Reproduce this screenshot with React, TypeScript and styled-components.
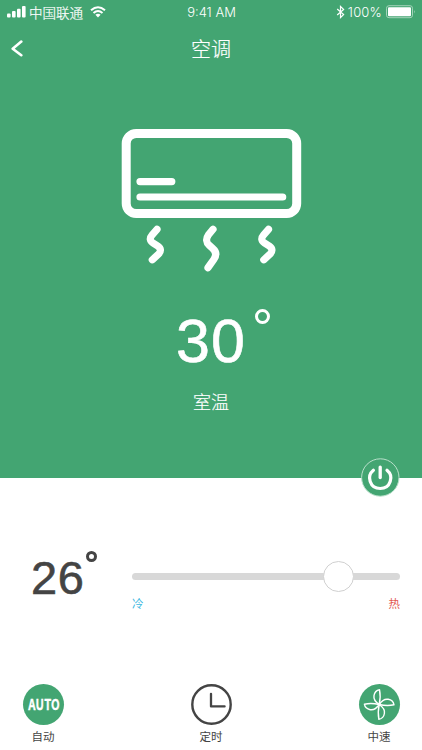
import React from 'react';
import styled, { createGlobalStyle } from 'styled-components';

const GREEN = '#43a572';
const DARK = '#444444';

const GlobalStyle = createGlobalStyle`
  * { box-sizing: border-box; }
  body { margin: 0; background: #fff; }
  svg { display: block; flex: none; }
`;

const Screen = styled.div`
  width: 422px;
  height: 750px;
  overflow: hidden;
  display: flex;
  flex-direction: column;
  background: #fff;
  font-family: Inter, 'Noto Sans CJK SC', sans-serif;
`;

const Hero = styled.section`
  height: 478px;
  flex: none;
  display: flex;
  flex-direction: column;
  background: ${GREEN};
  color: #fff;
`;

const StatusBar = styled.header`
  height: 24px;
  display: grid;
  grid-template-columns: 1fr auto 1fr;
  align-items: center;
  padding: 0 6px 0 7px;
  font-size: 13px;
  line-height: 24px;
`;

const StatusGroup = styled.div<{ $end?: boolean }>`
  display: flex;
  align-items: center;
  justify-content: ${(p) => (p.$end ? 'flex-end' : 'flex-start')};
`;

const Carrier = styled.span`
  margin: -1px 7px 0 3px;
  font-size: 13.5px;
  font-weight: 300;
  font-family: 'Noto Sans CJK SC', sans-serif;
  -webkit-text-stroke: 0.2px currentColor;
`;

const Clock = styled.span`
  font-size: 13px;
  font-weight: 300;
`;

const Percent = styled.span`
  margin: 0 4px 0 3px;
  font-size: 13px;
  font-weight: 300;
  letter-spacing: 0.2px;
`;

const NavBar = styled.nav`
  height: 49px;
  display: grid;
  grid-template-columns: 40px 1fr 40px;
  align-items: center;
`;

const BackButton = styled.button`
  border: 0;
  padding: 0 0 0 11px;
  background: none;
`;

const Title = styled.h1`
  margin: 0;
  text-align: center;
  font: 300 20px/28px 'Noto Sans CJK SC', sans-serif;
  -webkit-text-stroke: 0.2px currentColor;
`;

const Conditioner = styled.div`
  display: flex;
  justify-content: center;
  margin-top: 51px;
`;

const Reading = styled.div<{ $large?: boolean }>`
  display: flex;
  align-items: flex-start;
  color: ${(p) => (p.$large ? '#fff' : DARK)};
  font: 400 ${(p) => (p.$large ? '61px/61px' : '47px/47px')} 'Liberation Sans', sans-serif;
  letter-spacing: ${(p) => (p.$large ? '1px' : '0.5px')};
  -webkit-text-stroke: 0.6px currentColor;
`;

const RoomReading = styled(Reading)`
  margin: 33px 0 0 176px;
`;

const Degree = styled.i<{ $size: number; $stroke: number; $gap: number }>`
  width: ${(p) => p.$size}px;
  height: ${(p) => p.$size}px;
  margin-left: ${(p) => p.$gap}px;
  border: ${(p) => p.$stroke}px solid currentColor;
  border-radius: 50%;
`;

const Digits = styled.span<{ $drop: number }>`
  margin-top: ${(p) => p.$drop}px;
`;

const RoomLabel = styled.div`
  margin-top: 16px;
  text-align: center;
  font: 300 18px/26px 'Noto Sans CJK SC', sans-serif;
  -webkit-text-stroke: 0.2px currentColor;
`;

const Panel = styled.section`
  position: relative;
  flex: 1;
  display: flex;
  flex-direction: column;
  justify-content: space-between;
`;

const PowerButton = styled.button`
  position: absolute;
  top: -20px;
  right: 22px;
  padding: 0;
  border: 0;
  background: none;
`;

const Controls = styled.div`
  display: grid;
  grid-template-columns: 101px 268px;
  align-items: start;
  padding: 73px 0 0 31px;
`;

const SliderBlock = styled.div`
  padding-top: 10px;
`;

const Track = styled.div`
  display: flex;
  align-items: center;
  height: 31px;
`;

const Rail = styled.div<{ $side: 'left' | 'right' }>`
  width: ${(p) => (p.$side === 'left' ? '192px' : 'auto')};
  flex: ${(p) => (p.$side === 'left' ? 'none' : '1')};
  height: 7px;
  background: #d8d8d8;
  border-radius: ${(p) => (p.$side === 'left' ? '4px 0 0 4px' : '0 4px 4px 0')};
`;

const Knob = styled.div`
  width: 31px;
  height: 31px;
  margin: 0 -1px;
  border: 1px solid #d0d0d0;
  border-radius: 50%;
  background: #fff;
`;

const Ends = styled.div`
  display: flex;
  justify-content: space-between;
  margin-top: 3px;
  font: 400 11.5px/17px 'Noto Sans CJK SC', sans-serif;
`;

const EndLabel = styled.span<{ $hot?: boolean }>`
  color: ${(p) => (p.$hot ? '#e2574f' : '#3bb8df')};
`;

const Actions = styled.footer`
  display: flex;
  justify-content: space-between;
  padding: 0 22px 5px;
`;

const Action = styled.button`
  width: 42px;
  display: flex;
  flex-direction: column;
  align-items: center;
  border: 0;
  padding: 0;
  background: none;
  color: ${DARK};
  font: 400 11.5px/18px 'Noto Sans CJK SC', sans-serif;
`;

const Disc = styled.span<{ $plain?: boolean }>`
  width: 41px;
  height: 41px;
  margin-bottom: 2px;
  display: grid;
  place-items: center;
  border-radius: 50%;
  background: ${(p) => (p.$plain ? 'transparent' : GREEN)};
`;

const AutoText = styled.span`
  margin-top: -2px;
  color: #fff;
  font: 700 15px/20px 'Noto Sans CJK SC', sans-serif;
  letter-spacing: 0.3px;
  -webkit-text-stroke: 0.3px currentColor;
  transform: scaleX(0.75);
`;

const SignalIcon = () => (
  <svg width="19" height="12" viewBox="0 0 19 12" fill="#fff">
    <rect x="0" y="7.4" width="3.6" height="4" rx="1" />
    <rect x="5" y="5" width="3.6" height="6.4" rx="1" />
    <rect x="10" y="2.7" width="3.6" height="8.7" rx="1" />
    <rect x="15" y="0" width="3.6" height="11.4" rx="1" />
  </svg>
);

const WifiIcon = () => (
  <svg width="16" height="12" viewBox="0 0 16 12" fill="none" stroke="#fff" strokeWidth="2">
    <path d="M1 4.3Q8-1.9 15 4.3M3.5 7Q8 3.1 12.5 7" />
    <path d="M5.4 8.7Q8 6.7 10.6 8.7L8 11.5Z" fill="#fff" stroke="none" />
  </svg>
);

const BluetoothIcon = () => (
  <svg width="9" height="14" viewBox="0 0 9 14" fill="none" stroke="#fff" strokeWidth="1.2">
    <path d="M1.2 4L7.6 9.6L4.5 12.5V1.5L7.6 4.4L1.2 10" />
  </svg>
);

const BatteryIcon = () => (
  <svg width="30" height="14" viewBox="0 0 30 14">
    <rect x=".5" y=".7" width="26" height="12" rx="2.5" fill="none" stroke="#a3d3b9" />
    <rect x="2" y="2.2" width="23" height="9" rx="1" fill="#fff" />
    <path d="M28 4.9Q29.6 6.7 28 8.5Z" fill="#a3d3b9" />
  </svg>
);

const BackIcon = () => (
  <svg width="12" height="17" viewBox="0 0 12 17" fill="none" stroke="#fff" strokeWidth="2.6" strokeLinecap="round" strokeLinejoin="round">
    <path d="M10.3 1.6L1.7 8.7L10.3 15.2" />
  </svg>
);

const ConditionerIcon = () => (
  <svg width="184" height="152" viewBox="0 0 184 152" fill="none" stroke="#fff" strokeLinecap="round" strokeLinejoin="round">
    <rect x="7.2" y="9.5" width="170.5" height="80" rx="10" strokeWidth="9" />
    <path d="M21 57.6H52.8M21 73H163.7" strokeWidth="7.2" />
    <g strokeWidth="7.2">
      <path d="M38 105.3L33.2 110.8C30.4 114 30.6 116.8 34 119L38.7 122C42.2 124.4 42.3 127.4 39.2 130.4L33.3 135.8" />
      <path d="M94 105.3L89.3 111.1C86.8 114.5 87.1 118.6 90.2 121.3L93.5 124.2C97.2 127.4 97.8 131.2 94.8 135.5L89 143.7" />
      <path d="M149.5 105.3L144.7 110.8C141.9 114 142.1 116.8 145.5 119L150.2 122C153.7 124.4 153.8 127.4 150.7 130.4L144.8 135.8" />
    </g>
  </svg>
);

const PowerIcon = () => (
  <svg width="39" height="39" viewBox="0 0 39 39" fill="none">
    <circle cx="19.3" cy="19.5" r="18.7" fill={GREEN} stroke="#b9e0cb" />
    <path d="M19.2 9.1V19.6" stroke="#fff" strokeWidth="3.3" strokeLinecap="round" />
    <path d="M12.4 12.2C5.3 18 8.7 30.5 19.2 30.5C29.7 30.5 33.1 18 26 12.2" stroke="#fff" strokeWidth="3.2" strokeLinecap="round" />
  </svg>
);

const TimerIcon = () => (
  <svg width="41" height="41" viewBox="0 0 41 41" fill="none" stroke={DARK}>
    <circle cx="20.5" cy="20.5" r="19.2" strokeWidth="2.4" />
    <path d="M20 9.8V22.4H33.6" strokeWidth="2.3" strokeLinecap="round" strokeLinejoin="round" />
  </svg>
);

const FanIcon = () => (
  <svg width="41" height="41" viewBox="0 0 41 41" fill="none" stroke="#fff" strokeWidth="1.4" strokeLinejoin="round">
    <g transform="translate(20.2 20.5)">
      {[0, 90, 180, 270].map((angle) => (
        <path key={angle} transform={`rotate(${angle})`} d="M0 0C-3.6-2.4-5.8-5.6-5.2-9C-4.7-12-2.5-14.3 .3-14.8C1.2-10.5 1.1-5 0 0Z" />
      ))}
      <circle r="1.5" fill="#fff" stroke="none" />
    </g>
  </svg>
);

export default function App() {
  return (
    <>
      <GlobalStyle />
      <Screen>
        <Hero>
          <StatusBar>
            <StatusGroup>
              <SignalIcon />
              <Carrier>中国联通</Carrier>
              <WifiIcon />
            </StatusGroup>
            <Clock>9:41 AM</Clock>
            <StatusGroup $end>
              <BluetoothIcon />
              <Percent>100%</Percent>
              <BatteryIcon />
            </StatusGroup>
          </StatusBar>
          <NavBar>
            <BackButton aria-label="返回"><BackIcon /></BackButton>
            <Title>空调</Title>
          </NavBar>
          <Conditioner><ConditionerIcon /></Conditioner>
          <RoomReading $large>
            <Digits $drop={2}>30</Digits>
            <Degree $size={15} $stroke={3.5} $gap={9} />
          </RoomReading>
          <RoomLabel>室温</RoomLabel>
        </Hero>
        <Panel>
          <PowerButton aria-label="电源"><PowerIcon /></PowerButton>
          <Controls>
            <Reading>
              <Digits $drop={3}>26</Digits>
              <Degree $size={11} $stroke={3} $gap={2} />
            </Reading>
            <SliderBlock>
              <Track>
                <Rail $side="left" />
                <Knob />
                <Rail $side="right" />
              </Track>
              <Ends>
                <EndLabel>冷</EndLabel>
                <EndLabel $hot>热</EndLabel>
              </Ends>
            </SliderBlock>
          </Controls>
          <Actions>
            <Action>
              <Disc><AutoText>AUTO</AutoText></Disc>
              自动
            </Action>
            <Action>
              <Disc $plain><TimerIcon /></Disc>
              定时
            </Action>
            <Action>
              <Disc><FanIcon /></Disc>
              中速
            </Action>
          </Actions>
        </Panel>
      </Screen>
    </>
  );
}
